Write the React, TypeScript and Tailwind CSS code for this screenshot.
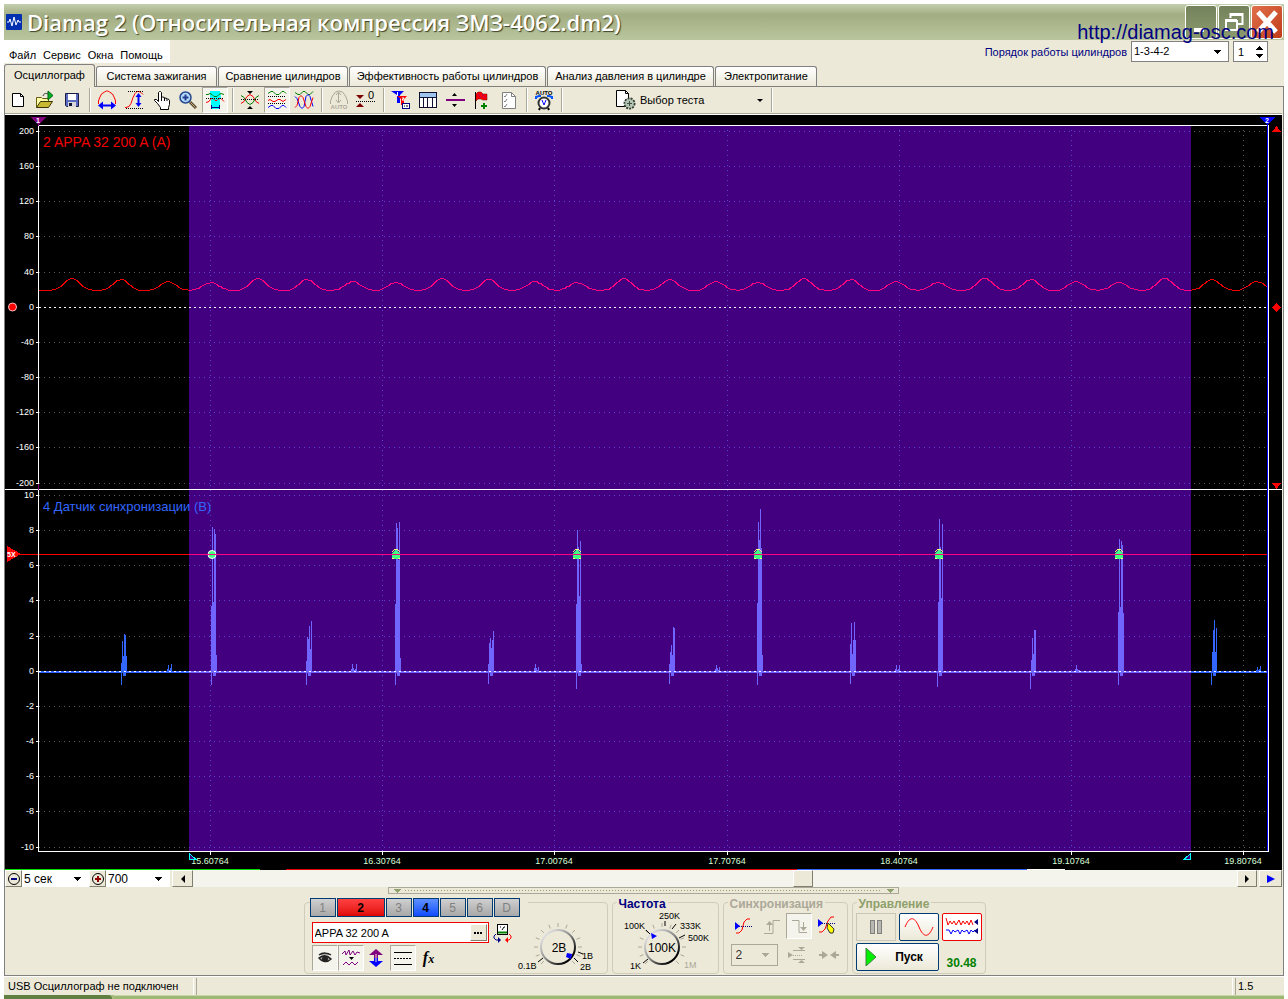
import { useState } from "react";
import type { ReactNode } from "react";

const PURPLE_START = 189;
const PURPLE_END = 1191;

const range = (n: number) => Array.from({ length: n }, (_, i) => i);

/* ---------- toolbar icons ---------- */

const Icon = ({ children, size = 20 }: { children: ReactNode; size?: number }) => (
  <svg width={size} height={size} viewBox={`0 0 ${size} ${size}`} fill="none" className="block shrink-0">
    {children}
  </svg>
);

const NewIcon = () => (
  <Icon>
    <path d="M4.5 3.5h8l3 3v10h-11z" fill="#fff" stroke="#000" />
    <path d="M12.5 3.5v3h3" stroke="#000" />
  </Icon>
);

const OpenIcon = () => (
  <Icon>
    <path d="M1.5 17.5v-10h5l1 1h6v3" fill="#ffffa8" stroke="#6b5d10" />
    <path d="M1.5 17.5l4-6h12l-4 6z" fill="#c9b832" stroke="#3a3508" />
    <path d="M13 1v9l5-4.5z" fill="#00b020" stroke="#006010" />
    <path d="M8 6c1-3 3-3 5-2" stroke="#333" />
  </Icon>
);

const SaveIcon = () => (
  <Icon>
    <path d="M3.5 3.5h13v13h-12l-1-1z" fill="#5a6ac0" stroke="#1c1c48" />
    <path d="M6 4h8v6H6z" fill="#fff" />
    <path d="M6 12h8v5H6z" fill="#d8d8d8" />
    <path d="M7 13h3v3H7z" fill="#101030" />
  </Icon>
);

const SpanIcon = () => (
  <Icon>
    <path d="M1.5 14v-3l1-3 2-4 3-2 2-1h1l2 1 3 2 2 4 1 3v3" stroke="#f00" />
    <path d="M4 15.5h12" stroke="#00f" strokeWidth="2" />
    <path d="M1 15.5l5-4v8zM19 15.5l-5-4v8z" fill="#00f" />
  </Icon>
);

const RiseIcon = () => (
  <Icon>
    <path d="M1 17.5h1l3-1 2-3 2-6 2-4 2-2h2l2 1 2 2" stroke="#f00" />
    <path d="M4 1.5h15M2 18.5h17" stroke="#000" strokeDasharray="1 1" />
    <path d="M14.5 5v10" stroke="#00f" strokeWidth="2" />
    <path d="M14.5 3l3 4h-6zM14.5 17l3-4h-6z" fill="#00f" />
  </Icon>
);

const HandIcon = () => (
  <Icon>
    <path
      d="M7.5 11.5V2.5l1-1h1l1 1v5l1-.5 2 .5.5.5 2 .5.5.5 1.5.5.5 1v4l-1 3v2h-8v-2l-3-4-3-3v-1h2z"
      fill="#fff"
      stroke="#000"
    />
    <path d="M10.5 7v4M13.5 8v3M16 9v2" stroke="#000" />
  </Icon>
);

const ZoomIcon = () => (
  <Icon>
    <path d="M12 12l6 6" stroke="#5a4a30" strokeWidth="3" />
    <path d="M12.5 12.5l5 5" stroke="#c8a878" />
    <circle cx="7.5" cy="7.5" r="5.5" fill="#b8dcff" stroke="#24488c" strokeWidth="1.5" />
    <path d="M4.5 7.5h6M7.5 4.5v6" stroke="#24408c" strokeWidth="2" />
  </Icon>
);

const CursorSpanIcon = () => (
  <Icon>
    <path d="M5 1h10l1 6-1 3v9H6v-9L5 7z" fill="#00ffff" />
    <path d="M1 4.5h2l2-1 2 1 2 2h3l2-2 2-1 3 1" stroke="#008000" />
    <path d="M1 12.5l3-1 2-3h2l2 2h2l2-2h2l3 3" stroke="#f00" />
    <path d="M1 8.5h18" stroke="#000" strokeDasharray="1 1" />
    <path d="M6.5 15v4M14.5 15v4M7 17.5h7" stroke="#000080" />
  </Icon>
);

const CenterIcon = () => (
  <Icon>
    <path d="M1 13.5l3-2 3-5 3-2 3 2 3 5 3 2" stroke="#f00" />
    <path d="M1 5.5l3 2 3 5 3 2 3-2 3-5 3-2" stroke="#008000" />
    <path d="M1 9.5h18" stroke="#000" strokeDasharray="1 1" />
    <path d="M7 1h6l-3 3zM7 19h6l-3-3z" fill="#000" />
  </Icon>
);

const StackIcon = () => (
  <Icon>
    <path d="M1 3.5l3-2h2l3 3h3l3-3h2l2 2" stroke="#008000" />
    <path d="M1 6.5h18M1 13.5h18" stroke="#000" strokeDasharray="1 1" />
    <path d="M1 10.5l2-1 3 2h2l3-2h2l3 2 3-2" stroke="#f00" />
    <path d="M1 17.5l3-2h2l3 3h3l3-3h2l2 2" stroke="#00f" />
  </Icon>
);

const OverlayIcon = () => (
  <Icon>
    <path d="M1 2.5l3 2h2l3-3h2l3 3h2l3-3" stroke="#008000" />
    <path d="M1 6.5l2 2 3 8 2 2 2-2 2-10 2-2 2 2 3 10" stroke="#00f" />
    <path d="M1 17.5l2-2 2-8 2-2 2 2 3 9 2 2 2-2 3-9" stroke="#f00" />
  </Icon>
);

const AutoIcon = () => (
  <Icon>
    <path d="M1.5 14v-3l2-5 3-4 3-1 4 1 3 4 2 5v3" stroke="#aca899" />
    <path d="M9.5 3v9M7 5l2.5-3L12 5M7 10l2.5 3 2.5-3" stroke="#aca899" />
    <text x="10" y="19" fontSize="6" fontWeight="700" textAnchor="middle" fill="#aca899">
      AUTO
    </text>
  </Icon>
);

const ZeroIcon = () => (
  <Icon>
    <path d="M0 5h8L4 9zM0 17h8l-4-4z" fill="#800000" />
    <path d="M0 11.5h20" stroke="#000" strokeDasharray="1 1" />
    <text x="12" y="9" fontSize="11" fill="#000">
      0
    </text>
  </Icon>
);

const FilterIcon = () => (
  <Icon>
    <path d="M0 1h13L9 5v8H6V5z" fill="#00f" />
    <path d="M6 6h10l-3 3v6h-3V9z" fill="#f00" />
    <path d="M6.5 2v4M11 8h2l-2 2h2" stroke="#fff" />
    <rect x="11.5" y="13.5" width="7" height="5" fill="#fff" stroke="#000080" />
    <path d="M13 16h1M15 16h2" stroke="#000" />
  </Icon>
);

const TableIcon = () => (
  <Icon>
    <rect x="1.5" y="2.5" width="17" height="15" fill="#fff" stroke="#101030" />
    <path d="M2 3h16v4H2z" fill="#9ec4ee" />
    <path d="M2 7.5h16M5.5 7v10M9.5 7v10M14.5 7v10" stroke="#101030" />
  </Icon>
);

const DividerIcon = () => (
  <Icon>
    <path d="M1 10h19" stroke="#800080" strokeWidth="2" />
    <path d="M7 6h5L9.500 3zM7 14h5l-2.500 3z" fill="#000" />
  </Icon>
);

const FlagIcon = () => (
  <Icon>
    <path d="M3.5 2v17" stroke="#000" />
    <path d="M4 4l2-2h3l2 2h4v6h-4l-2-1H6l-2 2z" fill="#f00" stroke="#600" strokeWidth=".5" />
    <path d="M6 4l3 4M10 4l3 4" stroke="#8000a0" strokeWidth=".7" />
    <path d="M12 13v6M9 16h6" stroke="#008000" strokeWidth="2" />
  </Icon>
);

const ChecklistIcon = () => (
  <Icon>
    <path d="M3.5 2.5h9l4 4v12h-13z" fill="#fff" stroke="#808080" />
    <path d="M12.5 2.5v4h4" stroke="#808080" />
    <path d="M5 6l1 1 2-3M5 11l1 1 2-3M5 16l1 1 2-3" stroke="#808080" />
  </Icon>
);

const AutoClockIcon = () => (
  <svg width="20" height="22" viewBox="0 0 20 22" fill="none" className="block">
    <text x="10" y="6" fontSize="6" fontWeight="700" textAnchor="middle" fill="#000">
      AUTO
    </text>
    <path d="M2 10V8l3-1h2M18 10V8l-3-1h-2" stroke="#0050ff" strokeWidth="2" />
    <circle cx="10" cy="14" r="5.500" fill="#fff" stroke="#333" strokeWidth="2" />
    <path d="M8 11l2 5 2-5" stroke="#00f" />
    <path d="M6 19l-1 2M14 19l1 2" stroke="#000" strokeWidth="2" />
  </svg>
);

const DocGearIcon = () => (
  <svg width="20" height="20" viewBox="0 0 20 20" fill="none" className="block">
    <path d="M.5.5h9l3 3v13H.5z" fill="#fff" stroke="#000" />
    <path d="M9.5.5v3h3" stroke="#000" />
    <circle cx="13.5" cy="13.5" r="5" fill="#b4c4b4" stroke="#354035" strokeDasharray="2 1" strokeWidth="2" />
    <circle cx="13.5" cy="13.5" r="4" fill="#b4c4b4" />
    <path d="M13.5 11v5M11 13.5h5" stroke="#405040" />
  </svg>
);

const Caret = () => (
  <svg width="8" height="4" viewBox="0 0 8 4" className="block" shapeRendering="crispEdges">
    <path d="M0 0h8L4 4z" fill="currentColor" />
  </svg>
);

/* ---------- toolbar ---------- */

const ToolButton = ({
  label,
  pressed = false,
  disabled = false,
  children,
}: {
  label: string;
  pressed?: boolean;
  disabled?: boolean;
  children: ReactNode;
}) => (
  <button
    type="button"
    aria-label={label}
    title={label}
    aria-pressed={pressed || undefined}
    disabled={disabled}
    className={
      pressed
        ? "flex h-[26px] w-[26px] shrink-0 items-center justify-center border border-t-[#aca899] border-l-[#aca899] border-r-white border-b-white bg-[#f5f4ec]"
        : "flex h-[26px] w-[26px] shrink-0 items-center justify-center"
    }
  >
    {children}
  </button>
);

const Separator = () => (
  <div className="flex h-[26px] w-[7px] shrink-0 items-center justify-center">
    <div className="h-6 w-0.5 border-r border-l border-r-white border-l-[#aca899]" />
  </div>
);

const Toolbar = () => (
  <div className="flex items-center gap-px border-b border-[#aca899]">
    <ToolButton label="Новый"><NewIcon /></ToolButton>
    <ToolButton label="Открыть"><OpenIcon /></ToolButton>
    <ToolButton label="Сохранить"><SaveIcon /></ToolButton>
    <Separator />
    <ToolButton label="Масштаб по времени"><SpanIcon /></ToolButton>
    <ToolButton label="Масштаб по амплитуде"><RiseIcon /></ToolButton>
    <ToolButton label="Рука"><HandIcon /></ToolButton>
    <ToolButton label="Лупа"><ZoomIcon /></ToolButton>
    <ToolButton label="Выделение" pressed><CursorSpanIcon /></ToolButton>
    <Separator />
    <ToolButton label="По центру"><CenterIcon /></ToolButton>
    <ToolButton label="Раздельно" pressed><StackIcon /></ToolButton>
    <ToolButton label="Совместно"><OverlayIcon /></ToolButton>
    <Separator />
    <ToolButton label="Авто" disabled><AutoIcon /></ToolButton>
    <ToolButton label="Ноль"><ZeroIcon /></ToolButton>
    <Separator />
    <ToolButton label="Маркеры"><FilterIcon /></ToolButton>
    <ToolButton label="Таблица"><TableIcon /></ToolButton>
    <ToolButton label="Линия"><DividerIcon /></ToolButton>
    <ToolButton label="Добавить флаг"><FlagIcon /></ToolButton>
    <ToolButton label="Список" disabled><ChecklistIcon /></ToolButton>
    <Separator />
    <ToolButton label="Автоматически"><AutoClockIcon /></ToolButton>
    <Separator />
    <button type="button" className="ml-[50px] flex h-[26px] w-[151px] items-center gap-1">
      <DocGearIcon />
      <span className="flex-1 text-left">Выбор теста</span>
      <svg width="6" height="3" viewBox="0 0 6 3" className="mr-1">
        <path d="M0 0h6L3 3z" fill="#000" />
      </svg>
    </button>
    <Separator />
  </div>
);

/* ---------- chart ---------- */

const ripple = [
  72, 121, 168, 211, 258, 307, 353, 396, 442, 489, 535, 577, 624, 670, 716, 758, 804, 851, 896, 938, 985, 1031, 1076,
  1119, 1165, 1212, 1257,
];
const rippleHeight = [12, 11, 9, 8];

const currentPath = range(615)
  .map((i) => {
    const x = 39 + i * 2;
    const lift = ripple.reduce((sum, p, k) => sum + rippleHeight[k % 4] * Math.exp(-(((x - p) / 11) ** 2)), 0);
    const y = Math.round(290 - lift + (i % 5 === 0 ? 0.4 : 0)) + 0.5;
    return `${i ? "L" : "M"}${x} ${y}`;
  })
  .join("");

// each burst: first column x, bottom of the first column, tops of the columns
const bursts: [number, number, number[]][] = [
  [121, 685, [663, 641, 656, 634, 635, 656]],
  [167, 671, [669, 665, 670, 668, 664]],
  [211, 685, [606, 527, 602, 529, 534, 655]],
  [306, 685, [661, 637, 639, 626, 649, 621]],
  [351, 671, [669, 664, 668, 670, 669, 664]],
  [395, 685, [604, 523, 528, 560, 522, 658]],
  [488, 684, [664, 643, 638, 648, 640, 631]],
  [534, 671, [668, 664, 668, 670, 667]],
  [576, 689, [604, 530, 547, 596, 541, 664]],
  [669, 684, [664, 652, 645, 655, 627, 628]],
  [715, 671, [669, 665, 668, 670, 667]],
  [757, 685, [603, 522, 540, 509, 548, 655]],
  [850, 684, [644, 623, 654, 640, 622, 640]],
  [895, 671, [669, 665, 670, 669, 665]],
  [937, 687, [674, 602, 519, 547, 598, 524]],
  [1030, 689, [674, 660, 638, 654, 630, 630]],
  [1075, 671, [669, 665, 669, 670, 670]],
  [1118, 685, [612, 539, 607, 541, 545, 613]],
  [1211, 685, [674, 652, 630, 620, 652, 628]],
  [1256, 671, [670, 667, 670, 669, 666]],
];

const syncMarks = [212, 396, 577, 758, 939, 1119];
const timeLabels = ["15.60764", "16.30764", "17.00764", "17.70764", "18.40764", "19.10764", "19.80764"];

const GridLine = ({ y }: { y: number }) => (
  <g strokeDasharray="1 4">
    <path d={`M39 ${y}.5H${PURPLE_START}`} stroke="#5c5c5c" />
    <path d={`M${PURPLE_START} ${y}.5H${PURPLE_END}`} stroke="#5a46d0" />
    <path d={`M${PURPLE_END + 3} ${y}.5H1267`} stroke="#5c5c5c" />
  </g>
);

const Scale = ({ top, values }: { top: number; values: number[] }) => (
  <>
    {values.map((v, i) => {
      const y = Math.round(top + i * 35.15);
      return (
        <g key={v}>
          {v !== 0 && <GridLine y={y} />}
          <path d={`M36 ${y}.5h2`} stroke="#fff" />
          <text x="34" y={y + 3} textAnchor="end">
            {v}
          </text>
        </g>
      );
    })}
  </>
);

const Chart = () => (
  <svg
    viewBox="5 115 1277 754"
    className="block h-auto w-full bg-black"
    shapeRendering="crispEdges"
    role="img"
    aria-label="Осциллограмма"
  >
    <defs>
      <clipPath id="selection">
        <rect x={PURPLE_START} y="126" width={PURPLE_END - PURPLE_START} height="725" />
      </clipPath>
    </defs>
    <rect x={PURPLE_START} y="126" width={PURPLE_END - PURPLE_START} height="725" fill="#420080" />

    <g fill="#fff" fontSize="9">
      <Scale top={131} values={range(11).map((i) => 200 - i * 40)} />
      <Scale top={495} values={range(11).map((i) => 10 - i * 2)} />
    </g>
    {timeLabels.map((label, i) => {
      const x = Math.round(210 + i * 172.2);
      return (
        <g key={label}>
          <path d={`M${x}.5 130V851`} stroke={i === 6 ? "#5c5c5c" : "#5a46d0"} strokeDasharray="1 4" />
          <path d={`M${x}.5 852v3`} stroke="#fff" />
          <text x={x} y="864" fontSize="9" textAnchor="middle" fill="#d8ffd8">
            {label}
          </text>
        </g>
      );
    })}

    <text x="43" y="147" fontSize="14" fill="#f00000">
      2 APPA 32 200 A (A)
    </text>
    <text x="43" y="511" fontSize="13" fill="#3366ff">
      4 Датчик синхронизации (В)
    </text>

    <path d="M39 307.500H1267" stroke="#fff" strokeDasharray="2 3" />
    <path d={currentPath} fill="none" stroke="#f00000" />
    <path d={currentPath} fill="none" stroke="#ff0080" clipPath="url(#selection)" />

    <path d="M39 672H1267" stroke="#3366ff" strokeWidth="2" />
    <path d={`M${PURPLE_START} 672H${PURPLE_END}`} stroke="#7066ff" strokeWidth="2" />
    {bursts.map(([x, bottom, tops]) => (
      <g key={x} fill={x > PURPLE_START && x < PURPLE_END ? "#7066ff" : "#3366ff"}>
        <rect x={x} y="671" width="1" height={bottom - 671} />
        {bottom > 671 && <rect x={x + 2} y="671" width="3" height="5" />}
        {tops.map((t, i) => (
          <rect key={i} x={x + i} y={t} width="1" height={Math.max(672 - t, 1)} />
        ))}
      </g>
    ))}
    <path d="M39 671.500H1267" stroke="#fff" strokeDasharray="2 3" />

    {syncMarks.map((x, i) =>
      i === 0 ? (
        <circle key={x} cx={x} cy="554.500" r="4" fill="#40ff80" stroke="#fff" shapeRendering="geometricPrecision" />
      ) : (
        <g key={x}>
          <path d={`M${x - 4} 559v-5l3-4h2l3 4v5z`} fill="#40ff80" />
          <path d={`M${x - 4} 552l3-3h2l3 3M${x - 4} 558.500h2m4 0h2`} fill="none" stroke="#ffff80" />
        </g>
      ),
    )}
    <path d="M20 554.500H1267" stroke="#f00" />
    <path d={`M${PURPLE_START} 554.500H${PURPLE_END}`} stroke="#ff0080" />

    <path d="M38.500 125V852M38 125.500H1267M5 489.500H1282M38 851.500H1269M1268.500 125V852" stroke="#fff" fill="none" />
    <path d="M1267.500 125V851" stroke="#00f" />
    <path d="M38.500 118v8M38.500 484v6" stroke="#800080" />

    <path d="M31 117h15l-7.500 8z" fill="#800080" />
    <text x="36" y="123" fontSize="7" fontWeight="700" fill="#fff">1</text>
    <path d="M1260 117h15l-7.500 8z" fill="#00f" />
    <text x="1265" y="123" fontSize="7" fontWeight="700" fill="#fff">2</text>

    <path d="M1272 132h9l-4.500-6zM1272 483h9l-4.500 6zM1276.500 303l4.500 4.500-4.500 4.500-4.500-4.500z" fill="#f00" />
    <circle cx="12.500" cy="307" r="4" fill="#f00" stroke="#ffc0c0" shapeRendering="geometricPrecision" />
    <path d="M7 546l14 8-14 8z" fill="#f00" />
    <text x="7" y="557" fontSize="7" fontWeight="700" fill="#fff">5X</text>
    <path d="M189.500 853.500v5.500h6zM1190.500 853.500v5.500h-6z" fill="#400080" stroke="#00ffff" />
  </svg>
);

/* ---------- scroll row ---------- */

const raised =
  "flex items-center justify-center border border-t-white border-l-white border-r-[#808070] border-b-[#808070] bg-[#ece9d8]";

const ScaleSelect = ({ label, value, className }: { label: string; value: string; className: string }) => (
  <div className={`relative ${className}`}>
    <select aria-label={label} className="h-[17px] w-full appearance-none bg-white pl-0.5 text-[12px] leading-4">
      <option>{value}</option>
    </select>
    <span className="pointer-events-none absolute top-[7px] right-2">
      <Caret />
    </span>
  </div>
);

const ScrollRow = () => (
  <div className="flex h-[17px] items-stretch">
    <button type="button" aria-label="Уменьшить" className={`w-[17px] ${raised}`}>
      <Icon size={14}>
        <circle cx="7" cy="7" r="5.500" stroke="#000" />
        <path d="M4 7h6" stroke="#000080" strokeWidth="2" />
      </Icon>
    </button>
    <ScaleSelect label="Развёртка" value="5 сек" className="w-[67px]" />
    <button type="button" aria-label="Увеличить" className={`w-[17px] ${raised}`}>
      <Icon size={14}>
        <circle cx="7" cy="7" r="5.500" stroke="#000" />
        <path d="M4 7h6M7 4v6" stroke="#900000" strokeWidth="2" />
      </Icon>
    </button>
    <ScaleSelect label="Точек" value="700" className="w-16" />
    <button type="button" aria-label="Влево" className={`ml-0.5 w-[21px] ${raised}`}>
      <svg width="4" height="8" viewBox="0 0 4 8"><path d="M4 0v8L0 4z" fill="#000" /></svg>
    </button>
    <div className="flex flex-1 bg-[#f5f4ec]">
      <div className="grow-58" />
      <div className={`w-5 ${raised}`} />
      <div className="grow-41" />
    </div>
    <button type="button" aria-label="Вправо" className={`w-5 ${raised}`}>
      <svg width="4" height="8" viewBox="0 0 4 8"><path d="M0 0v8l4-4z" fill="#000" /></svg>
    </button>
    <button type="button" aria-label="Воспроизвести" className={`ml-0.5 w-[23px] ${raised}`}>
      <svg width="8" height="8" viewBox="0 0 8 8"><path d="M0 0v8l8-4z" fill="#00f" /></svg>
    </button>
  </div>
);

const Splitter = () => (
  <div className="flex h-[7px] justify-center">
    <div className="flex w-2/5 items-center justify-between border border-[#aca899] px-1 text-[#8fa06c]">
      <Caret />
      <div className="mx-1 h-px flex-1 bg-[repeating-linear-gradient(90deg,#8fa06c_0_1px,transparent_1px_3px)]" />
      <Caret />
    </div>
  </div>
);

/* ---------- control panel ---------- */

const channels = [
  { name: "1", className: "w-[26px] bg-linear-to-b from-[#d0d0d0] to-[#a8a8a8] text-[#808080]" },
  { name: "2", className: "w-12 bg-linear-to-b from-[#ff4040] to-[#e00000] font-bold text-black" },
  { name: "3", className: "w-[26px] bg-linear-to-b from-[#d0d0d0] to-[#a8a8a8] text-[#808080]" },
  { name: "4", className: "w-[26px] bg-linear-to-b from-[#5f8fff] to-[#1048ff] font-bold text-black" },
  { name: "5", className: "w-[26px] bg-linear-to-b from-[#d0d0d0] to-[#a8a8a8] text-[#808080]" },
  { name: "6", className: "w-[26px] bg-linear-to-b from-[#d0d0d0] to-[#a8a8a8] text-[#808080]" },
  { name: "D", className: "w-[26px] bg-linear-to-b from-[#d0d0d0] to-[#a8a8a8] text-[#808080]" },
];

const group = "h-20 min-w-0 rounded-[4px] border border-[#cfccba]";
const legend = "ml-1 h-4 px-0.5 pt-1 text-[12px] leading-3 font-bold";

const Dial = ({ cx, cy, id, children }: { cx: number; cy: number; id: string; children: ReactNode }) => (
  <>
    <defs>
      <linearGradient id={id} x1="0" y1="0" x2="1" y2="1">
        <stop offset="0" stopColor="#fff" />
        <stop offset=".5" stopColor="#888" />
        <stop offset=".85" stopColor="#000" />
      </linearGradient>
    </defs>
    {range(13).map((i) => {
      const a = ((135 + i * 22.5) * Math.PI) / 180;
      return (
        <path
          key={i}
          d={`M${cx + 20 * Math.cos(a)} ${cy + 20 * Math.sin(a)}L${cx + 24 * Math.cos(a)} ${cy + 24 * Math.sin(a)}`}
          stroke="#aca899"
        />
      );
    })}
    <circle cx={cx} cy={cy} r="17" fill="#ece9d8" stroke={`url(#${id})`} strokeWidth="2" />
    {children}
  </>
);

const ChannelGroup = () => {
  const [sensor, setSensor] = useState("APPA 32 200 A");
  return (
    <fieldset className={`${group} w-[304px]`}>
      <legend className="ml-[5px] h-4 pt-1 pr-2">
        <div className="flex gap-px bg-[#ece9d8]">
          {channels.map((c) => (
            <button
              key={c.name}
              type="button"
              className={`h-[19px] border border-[#003c74] text-[12px] leading-4 ${c.className}`}
            >
              {c.name}
            </button>
          ))}
        </div>
      </legend>
      <div className="flex pt-3">
        <div className="w-[210px] pl-[7px]">
          <div className="flex items-center gap-1">
            <div className="flex h-[21px] w-[177px] border border-[#f00000] bg-white p-px">
              <input
                aria-label="Датчик"
                value={sensor}
                onChange={(e) => setSensor(e.target.value)}
                className="min-w-0 flex-1 bg-white pl-px text-[11px] leading-4 outline-none"
              />
              <button type="button" aria-label="Выбрать датчик" className={`w-[17px] ${raised}`}>
                <svg width="9" height="2" viewBox="0 0 9 2"><path d="M0 0h2v2H0zM3 0h2v2H3zM6 0h2v2H6z" fill="#000" /></svg>
              </button>
            </div>
            <button type="button" aria-label="Сменить датчик">
              <Icon>
                <rect x="4.5" y="1.5" width="10" height="10" fill="#fff" stroke="#000" />
                <path d="M5 9.5h9" stroke="#008000" strokeWidth="2" />
                <path d="M7 4h1M11 4h1M9 7l2-3" stroke="#000" />
                <path d="M3 11l-2 2v2l2 2h3" stroke="#000080" />
                <path d="M5 14l3 3-3 3z" fill="#000080" />
                <path d="M16 11l2 2v2l-2 2h-2" stroke="#f00" />
                <path d="M15 14l-3 3 3 3z" fill="#f00" />
              </Icon>
            </button>
          </div>
          <div className="flex pt-0.5">
            <ToolButton label="Показать" pressed>
              <Icon>
                <path d="M4 7c4-3 9-2 12 0M4 10c4-3 8-3 12 1-4 4-9 3-12-1z" stroke="#222" strokeWidth="1.500" fill="#aaa" />
                <circle cx="10" cy="11" r="3" fill="#222" />
              </Icon>
            </ToolButton>
            <ToolButton label="Фильтр" pressed>
              <Icon>
                <path d="M1 6l3-3 1 4 3-5 1 5 3-4 2 4 2-3 3 1M2 17l3-3 3 3 3-3 3 3 3-3" stroke="#800080" />
                <path d="M8 9h5l-2.500 3z" fill="#000" />
              </Icon>
            </ToolButton>
            <ToolButton label="Сдвиг">
              <Icon>
                <path d="M9 1l7 6h-5v3H7V7H2z" fill="#800080" />
                <path d="M9 19l7-6h-5v-3H7v3H2z" fill="#00f" />
                <path d="M9 6v8" stroke="#ece9d8" />
              </Icon>
            </ToolButton>
            <ToolButton label="Уровни" pressed>
              <Icon>
                <path d="M1 4.5h18M1 16.5h18" stroke="#000" />
                <path d="M1 10.5h18" stroke="#000" strokeDasharray="2 1" />
              </Icon>
            </ToolButton>
            <ToolButton label="Функция">
              <span className="font-['Liberation_Serif',serif] text-[16px] leading-4 font-bold italic">
                f<span className="text-[12px]">x</span>
              </span>
            </ToolButton>
          </div>
        </div>
        <svg width="92" height="64" viewBox="514 910 92 64" fontSize="9" className="-mt-3 block shrink-0" fill="none">
          <Dial cx={557} cy={947} id="volt">
            <path d="M577 952l5 2M573 958l4 4M542 958l-5 4" stroke="#000" />
            <path d="M566 953l5 1-1 5-5-2z" fill="#00f" />
            <text x="558" y="952" fontSize="12" textAnchor="middle" fill="#000">2В</text>
            <text x="517" y="969" fill="#000">0.1В</text>
            <text x="581" y="959" fill="#000">1В</text>
            <text x="579" y="970" fill="#000">2В</text>
          </Dial>
        </svg>
      </div>
    </fieldset>
  );
};

const FrequencyGroup = () => (
  <fieldset className={`${group} w-[107px]`}>
    <legend className={`${legend} text-[#000080]`}>Частота</legend>
    <svg width="103" height="62" viewBox="612 910 103 62" fontSize="9" className="block" fill="none">
      <Dial cx={661} cy={947} id="freq">
        <path d="M664 926v-5M671 929l4-5M678 938l6-3M649 934l-4-4M647 959l-5 4" stroke="#000" />
        <path d="M650 933l6 3-5 3z" fill="#00f" />
        <text x="661" y="952" fontSize="12" textAnchor="middle" fill="#000">100K</text>
        <text x="658" y="919" fill="#000">250K</text>
        <text x="623" y="929" fill="#000">100K</text>
        <text x="679" y="929" fill="#000">333K</text>
        <text x="687" y="941" fill="#000">500K</text>
        <text x="629" y="969" fill="#000">1K</text>
        <text x="683" y="968" fill="#aca899">1M</text>
      </Dial>
    </svg>
  </fieldset>
);

const SyncGroup = () => (
  <fieldset className={`${group} w-[125px]`}>
    <legend className={`${legend} text-[#aca899]`}>Синхронизация</legend>
    <div className="flex gap-0.5 pt-[3px] pl-1.5">
      <ToolButton label="Уровень">
        <Icon>
          <path d="M3 17h3l3-3 2-8 3-3h3" stroke="#f00" />
          <path d="M4 10.5h15" stroke="#000080" strokeDasharray="1 1" />
          <path d="M2 6v8l5-4z" fill="#00f" />
        </Icon>
      </ToolButton>
      <ToolButton label="Фронт" disabled>
        <Icon>
          <path d="M3 17.5h9v-13h7M8.500 15V8" stroke="#aca899" />
          <path d="M5 9h7L8.500 5z" fill="#aca899" />
        </Icon>
      </ToolButton>
      <ToolButton label="Спад" disabled pressed>
        <Icon>
          <path d="M3 4.5h7v12h8M14.500 6v7" stroke="#aca899" />
          <path d="M11 11h7l-3.500 4z" fill="#aca899" />
        </Icon>
      </ToolButton>
      <ToolButton label="Захват">
        <Icon>
          <path d="M2 16h3l3-3 3-8 3-4h3M9 9l5 3" stroke="#f00" />
          <path d="M1 7.5h18" stroke="#000080" strokeDasharray="1 1" />
          <path d="M1 3v8l5-4z" fill="#00f" />
          <path d="M11 7l6 6-1 4h-3l-3-5z" fill="#ff0" stroke="#333" />
        </Icon>
      </ToolButton>
    </div>
    <div className="flex items-center gap-1.5 pt-[3px] pl-[7px]">
      <div className="relative">
        <select
          aria-label="Канал синхронизации"
          disabled
          className="h-[22px] w-[47px] appearance-none border border-[#aca899] bg-[#ece9d8] pl-1 text-[12px] leading-4 text-[#333] opacity-100"
        >
          <option>2</option>
        </select>
        <span className="pointer-events-none absolute top-[9px] right-[9px] text-[#aca899]">
          <Caret />
        </span>
      </div>
      <ToolButton label="Диапазон" disabled>
        <Icon>
          <path d="M6 5.5h12M6 14.5h12" stroke="#aca899" />
          <path d="M6 10.5h10" stroke="#aca899" strokeDasharray="1 1" />
          <path d="M1 7v6l5-3zM11 2h7l-3.500 3zM11 18h7l-3.500-3z" fill="#aca899" />
        </Icon>
      </ToolButton>
      <ToolButton label="Сжать" disabled>
        <Icon>
          <path d="M0 10h4M16 10h4" stroke="#aca899" strokeWidth="2" />
          <path d="M3 6v8l6-4zM17 6v8l-6-4z" fill="#aca899" />
        </Icon>
      </ToolButton>
    </div>
  </fieldset>
);

const RunGroup = () => (
  <fieldset className={`${group} w-[134px]`}>
    <legend className={`${legend} text-[#8fa06c]`}>Управление</legend>
    <div className="flex gap-[3px] px-[3px] pt-[3px]">
      <button
        type="button"
        disabled
        aria-label="Пауза"
        className="flex h-7 w-10 items-center justify-center gap-0.5 border border-[#c9c7ba]"
      >
        <span className="h-[14px] w-[5px] border border-[#808080] bg-[#b8b8b0]" />
        <span className="h-[14px] w-[5px] border border-[#808080] bg-[#b8b8b0]" />
      </button>
      <button
        type="button"
        aria-label="Синус"
        className="flex h-7 w-10 items-center justify-center rounded-xs border border-[#003c74] bg-linear-to-b from-white to-[#ece9d8]"
      >
        <svg width="30" height="20" viewBox="0 0 30 20" fill="none">
          <path d="M1 10c4-10 9-12 14 0s10 10 14 0" stroke="#f00" />
        </svg>
      </button>
      <button
        type="button"
        aria-label="Сигналы"
        className="flex h-7 w-10 items-center justify-center rounded-xs border border-[#f00000] bg-white"
      >
        <svg width="34" height="20" viewBox="0 0 34 20" fill="none">
          <path d="M1 1l2 7 2-4 2 3 2-3 2 4 3-5 2 5 2-4 2 3 2-3 2 4 2-5 2 5" stroke="#f00" />
          <path d="M1 13h3l2 4 2-4 2 2 3-2 2 4 2-4 2 2 3-2 2 4 2-4 2 2 2-2" stroke="#00f" />
          <path d="M33 2v6l-4-3zM33 11v6l-4-3z" fill="#000080" />
        </svg>
      </button>
    </div>
    <div className="flex items-end gap-2 px-[3px] pt-0.5">
      <button
        type="button"
        className="flex h-7 w-[83px] items-center rounded-xs border border-[#003c74] bg-linear-to-b from-white to-[#ece9d8] pl-2"
      >
        <svg width="12" height="20" viewBox="0 0 12 20"><path d="M1 1v18l10-9z" fill="#00f000" stroke="#408040" /></svg>
        <span className="flex-1 pl-1 text-center text-[12px] leading-4 font-bold">Пуск</span>
      </button>
      <output className="text-[12px] leading-4 font-bold text-[#008000]">30.48</output>
    </div>
  </fieldset>
);

/* ---------- window ---------- */

const titleButton = "flex h-[34px] w-8 items-center justify-center rounded-[3px] border border-white";

const TitleBar = () => (
  <header className="relative flex h-9 items-center bg-linear-to-b from-[#c4cfae] via-[#a3ad83] via-30% to-[#b9c69d] pl-0.5">
    <svg width="16" height="16" viewBox="0 0 16 16" className="mb-px">
      <rect width="16" height="16" rx="1" fill="#0030b0" />
      <path d="M1 8h2l1-3 2 7 2-9 2 8 2-5 1 2h2" stroke="#fff" fill="none" />
    </svg>
    <h1 className="ml-[5px] flex-1 truncate font-['Open_Sans','Noto_Sans',sans-serif] text-[22px] leading-8 font-semibold text-white [text-shadow:1px_1px_1px_#3c4426]">
      Diamag 2 (Относительная компрессия ЗМЗ-4062.dm2)
    </h1>
    <div className="flex gap-px pr-px">
      <button type="button" aria-label="Свернуть" className={`${titleButton} bg-linear-to-b from-[#73825a] to-[#8b9a6e]`}>
        <span className="mt-4 mr-1 h-1 w-2.5 bg-white" />
      </button>
      <button type="button" aria-label="Восстановить" className={`${titleButton} bg-linear-to-b from-[#73825a] to-[#8b9a6e]`}>
        <svg width="20" height="20" viewBox="0 0 20 20" fill="none">
          <path d="M6.5 6V2h12v10H14" stroke="#fff" strokeWidth="2" />
          <path d="M6 2.5h13M1 8.5h12" stroke="#fff" strokeWidth="3" />
          <path d="M2 8v10h11V8" stroke="#fff" strokeWidth="2" />
        </svg>
      </button>
      <button type="button" aria-label="Закрыть" className={`${titleButton} bg-linear-to-br from-[#e0704a] to-[#c03c14]`}>
        <svg width="22" height="24" viewBox="0 0 22 24">
          <path d="M2 2l18 20M20 2L2 22" stroke="#fff" strokeWidth="5" />
        </svg>
      </button>
    </div>
    <a
      href="http://diamag-osc.com"
      className="absolute top-4 right-[10px] z-10 text-[20px] leading-6 whitespace-nowrap text-[#000080]"
    >
      http://diamag-osc.com
    </a>
  </header>
);

const MenuRow = () => (
  <div className="flex h-6 items-start justify-between">
    <nav className="flex h-[23px] w-[166px] items-center gap-[7px] bg-white pt-1.5 pl-[5px]">
      {["Файл", "Сервис", "Окна", "Помощь"].map((item) => (
        <button key={item} type="button">
          {item}
        </button>
      ))}
    </nav>
    <div className="flex items-center pt-px pr-4">
      <label htmlFor="order" className="pr-1 text-[#000080]">
        Порядок работы цилиндров
      </label>
      <div className="relative">
        <select
          id="order"
          className="h-[21px] w-[98px] appearance-none border border-[#808080] bg-white pb-0.5 pl-0.5 text-[11px] leading-4"
        >
          <option>1-3-4-2</option>
        </select>
        <span className="pointer-events-none absolute top-[9px] right-2">
          <Caret />
        </span>
      </div>
      <div className="ml-1 flex h-[21px] w-[35px] items-center border border-[#808080] bg-white">
        <input aria-label="Цилиндр" defaultValue="1" className="w-0 flex-1 pl-1 text-[11px] leading-4 outline-none" />
        <div className="mr-1 flex flex-col gap-1">
          <button type="button" aria-label="Больше" className="rotate-180"><Caret /></button>
          <button type="button" aria-label="Меньше"><Caret /></button>
        </div>
      </div>
    </div>
  </div>
);

const tabs = [
  { name: "Система зажигания", width: "w-[121px]" },
  { name: "Сравнение цилиндров", width: "w-[130px]" },
  { name: "Эффективность работы цилиндров", width: "w-[197px]" },
  { name: "Анализ давления в цилиндре", width: "w-[167px]" },
  { name: "Электропитание", width: "w-[102px]" },
];

const Tabs = () => (
  <div role="tablist" className="flex h-[22px] items-end gap-px">
    <button
      role="tab"
      type="button"
      aria-selected="true"
      className="z-10 -mb-px h-[23px] w-[91px] rounded-t-[3px] border border-b-0 border-[#808080] bg-[#ece9d8] pb-0.5"
    >
      Осциллограф
    </button>
    {tabs.map((tab) => (
      <button
        key={tab.name}
        role="tab"
        type="button"
        aria-selected="false"
        className={`h-5 rounded-t-[3px] border border-b-0 border-[#808080] bg-linear-to-b from-white to-[#ece9d8] pb-0.5 ${tab.width}`}
      >
        {tab.name}
      </button>
    ))}
  </div>
);

const StatusBar = () => (
  <footer className="flex h-[19px] items-center gap-0.5 border-t border-white pt-px">
    <span className="h-[17px] w-[190px] truncate border-r border-r-white pl-1 leading-4">
      USB Осциллограф не подключен
    </span>
    <span className="h-[17px] flex-1 border-r border-l border-r-white border-l-[#aca899]" />
    <span className="h-[17px] w-[49px] border-l border-l-[#aca899] pl-0.5 leading-4">1.5</span>
  </footer>
);

const App = () => (
  <div className="bg-white px-1 pt-1 font-['Liberation_Sans',Arial,sans-serif] text-[11px] leading-4 text-black">
    <div className="bg-[#ece9d8]">
      <TitleBar />
      <MenuRow />
      <Tabs />
      <main className="border border-[#808080] pr-px">
        <Toolbar />
        <div className="border-t border-white">
          <Chart />
        </div>
        <div className="flex h-px bg-white">
          <div className="w-1/5 bg-[#00e000]" />
          <div className="w-[2%] bg-black" />
          <div className="w-2/5 bg-[#e00000]" />
          <div className="w-[18%] bg-[#3366ff]" />
          <div className="ml-[3%] flex-1 bg-black" />
        </div>
        <ScrollRow />
        <Splitter />
        <div className="flex h-[81px] justify-center gap-1 pl-0.5">
          <ChannelGroup />
          <FrequencyGroup />
          <SyncGroup />
          <RunGroup />
        </div>
      </main>
      <StatusBar />
    </div>
    <div className="flex h-1 gap-0.5 bg-[#a9bd82]">
      <div className="w-[108px] rounded-tr-sm bg-[#5f8040]" />
      <div className="flex-1 border-t border-[#c6d6a4] bg-[#9db874]" />
    </div>
  </div>
);

export default App;
